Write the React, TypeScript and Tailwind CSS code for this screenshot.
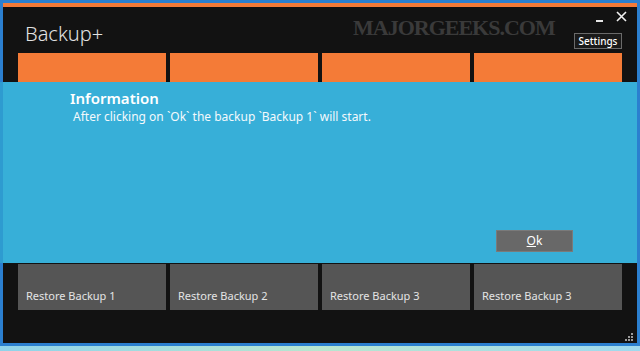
import React from 'react';

const tiles = ['Restore Backup 1', 'Restore Backup 2', 'Restore Backup 3', 'Restore Backup 3'];

export default function App() {
  return (
    <div className="w-[640px] h-[351px] flex flex-col bg-[#a9dcec] overflow-hidden" style={{ fontFamily: '"Noto Sans", "Open Sans", sans-serif' }}>
      <div className="h-[346px] flex flex-col border-t-[3px] border-x-[3px] border-b-[3px] border-[#2b7fcf] bg-[#121212] relative">
        <div className="h-[4px] bg-[#f27a37]" />

        {/* header */}
        <div className="h-[46px] flex justify-between relative">
          <div className="pl-[22px] pt-[13px] text-[20px] leading-[28px] font-light text-[#e2e2e2]">Backup+</div>
          <div
            className="absolute left-[350px] top-[4px] text-[22px] font-bold tracking-[-1px] text-[#3a3a3a]"
            style={{ fontFamily: '"Liberation Serif", serif' }}
          >
            MAJORGEEKS.COM
          </div>
          <div className="flex flex-col items-end pr-[15px]">
            <div className="flex items-start gap-[13px] mr-[-5px] pt-[4px] h-[26px]">
              <svg width="7" height="12" viewBox="0 0 7 12" className="mt-[2px]">
                <rect x="0" y="7" width="7" height="2" fill="#e6e6e6" />
              </svg>
              <svg width="11" height="11" viewBox="0 0 11 11">
                <path d="M1 1 L10 10 M10 1 L1 10" stroke="#f0f0f0" strokeWidth="1.6" />
              </svg>
            </div>
            <div className="w-[48px] h-[16px] border border-[#6a6a6a] bg-[#1a1a1a] text-[10px] leading-[14px] font-medium text-white flex items-center justify-center">
              Settings
            </div>
          </div>
        </div>

        {/* orange tiles */}
        <div className="h-[29px] flex gap-[4px] pl-[15px]">
          {tiles.map((_, i) => (
            <div key={i} className="w-[148px] bg-[#f47b37]" />
          ))}
        </div>

        {/* information band */}
        <div className="h-[181px] bg-[#37afd8] flex flex-col ml-[-3px] mr-[-3px] border-l-[3px] border-r-[3px] border-l-[#2e9bd0] border-r-[#2b7fcf]">
          <div className="pl-[67px] pt-[6px] text-[15px] leading-[20px] font-semibold text-white">Information</div>
          <div className="pl-[70px] pt-[1px] text-[12px] leading-[16px] text-[#f4f9fc]">
            After clicking on `Ok` the backup `Backup 1` will start.
          </div>
          <div className="flex-1" />
          <div className="flex justify-end pr-[64px] pb-[11px]">
            <div className="w-[77px] h-[22px] bg-[#686868] border border-[#7a7a7a] flex items-center justify-center text-[12px] text-white">
              <span><span className="underline">O</span>k</span>
            </div>
          </div>
        </div>

        {/* restore tiles */}
        <div className="h-[46px] mt-[1px] flex gap-[4px] pl-[15px]">
          {tiles.map((t, i) => (
            <div key={i} className="w-[148px] bg-[#555555] flex items-end pl-[8px] pb-[7px] text-[11px] leading-[15px] text-[#e4e4e4]">
              {t}
            </div>
          ))}
        </div>

        <div className="flex-1 flex justify-end items-end pr-[3px] pb-[1px]">
          <svg width="9" height="9" viewBox="0 0 9 9">
            <rect x="6" y="0" width="2" height="2" fill="#9a9a9a" />
            <rect x="3" y="3" width="2" height="2" fill="#9a9a9a" />
            <rect x="6" y="3" width="2" height="2" fill="#9a9a9a" />
            <rect x="0" y="6" width="2" height="2" fill="#9a9a9a" />
            <rect x="3" y="6" width="2" height="2" fill="#9a9a9a" />
            <rect x="6" y="6" width="2" height="2" fill="#9a9a9a" />
          </svg>
        </div>
      </div>
      <div className="flex-1 bg-gradient-to-r from-[#8fd3ea] via-[#b8e6cf] to-[#9fd9ee]" />
    </div>
  );
}
